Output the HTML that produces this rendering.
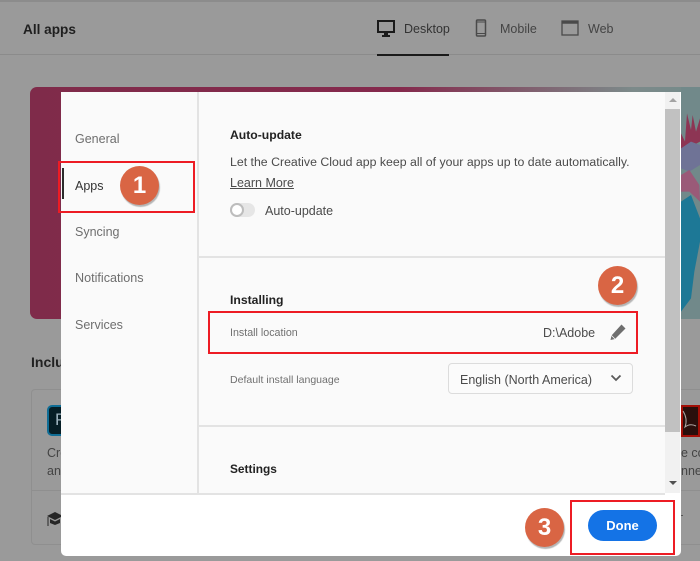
<!DOCTYPE html>
<html><head><meta charset="utf-8"><style>
html,body{margin:0;padding:0}
body{width:700px;height:561px;overflow:hidden;position:relative;background:#9a9a9a;font-family:"Liberation Sans",sans-serif;color:#4b4b4b}
.a{position:absolute;white-space:nowrap}
.t{position:absolute;white-space:nowrap;line-height:16px}
.red{position:absolute;border:2px solid #ed1c24;box-sizing:border-box}
.c{position:absolute;width:39px;height:39px;border-radius:50%;background:#d96544;color:#fff;font-weight:bold;font-size:24px;line-height:39px;text-align:center;box-shadow:1px 2px 1px #b5b5b5}
</style></head><body>
<div class="a" style="left:0;top:0;width:700px;height:2px;background:#8c8c8c"></div>
<div class="a" style="left:0;top:54px;width:700px;height:1px;background:#8b8b8b"></div>
<div class="t" style="left:23px;top:22px;font-size:13.6px;font-weight:bold;color:#1f1f1f">All apps</div>
<svg class="a" style="left:376px;top:19px" width="20" height="19" viewBox="0 0 20 19"><path d="M2 2h16v11H2z" fill="none" stroke="#1a1a1a" stroke-width="2"/><path d="M8 14h4v2h2v2H6v-2h2z" fill="#1a1a1a"/></svg>
<div class="t" style="left:404px;top:21px;font-size:12.5px;color:#333">Desktop</div>
<div class="a" style="left:377px;top:54px;width:72px;height:2px;background:#1a1a1a"></div>
<svg class="a" style="left:475px;top:19px" width="12" height="18" viewBox="0 0 12 18"><rect x="1.500" y="1" width="9" height="16" rx="1" fill="none" stroke="#4a4a4a" stroke-width="1.500"/><path d="M2 3h8M2 14.500h8" stroke="#4a4a4a"/></svg>
<div class="t" style="left:500px;top:21px;font-size:12.5px;color:#444">Mobile</div>
<svg class="a" style="left:561px;top:20px" width="18" height="16" viewBox="0 0 18 16"><rect x="1" y="1" width="16" height="14" fill="none" stroke="#4a4a4a" stroke-width="1.300"/><path d="M1 2.500h16" stroke="#4a4a4a" stroke-width="2.500"/></svg>
<div class="t" style="left:588px;top:21px;font-size:12.5px;color:#444">Web</div>

<div class="a" style="left:30px;top:87px;width:670px;height:232px;border-radius:7px 0 0 7px;overflow:hidden;background:linear-gradient(90deg,#7f2b4a 0,#85294c 55%,#7c8a8a 90%,#748b8a 100%)">
<svg style="position:absolute;left:651px;top:-2px" width="19" height="236" viewBox="0 0 57 708"><rect width="57" height="708" fill="#71898a"/><path d="M18 85L30 135 35 90 45 140 57 100V170L0 200V145L12 170z" fill="#8d3554"/><path d="M0 190L30 170 57 180V240L25 260 0 250z" fill="#6f7396"/><path d="M0 270L25 255 55 300 57 350 25 320H0z" fill="#9a5a78"/><path d="M0 350L30 330 57 400V470L40 560 30 640 0 680z" fill="#1d7896"/></svg>
</div>

<div class="t" style="left:31px;top:354px;font-size:14px;font-weight:bold;color:#222">Inclu</div>
<div class="a" style="left:31px;top:389px;width:700px;height:156px;border:1px solid #8f8f8f;border-radius:4px;box-sizing:border-box"></div>
<div class="a" style="left:32px;top:490px;width:668px;height:1px;background:#8f8f8f"></div>
<div class="a" style="left:47px;top:405px;width:25px;height:31px;background:#061e26;border:2px solid #0f6d95;border-radius:5px;box-sizing:border-box"></div>
<div class="t" style="left:55px;top:412px;font-size:17px;color:#9eb3bf">P</div>
<div class="t" style="left:47px;top:445px;font-size:12.5px;color:#444">Cre</div>
<div class="t" style="left:47px;top:463px;font-size:12.5px;color:#444">an</div>
<svg class="a" style="left:47px;top:511px" width="16" height="18" viewBox="0 0 16 18"><path d="M8 1L0 5l8 4 8-4z M3 8v4l5 2 5-2V8L8 10.500z" fill="#262626"/><path d="M1 6v9" stroke="#262626"/></svg>
<div class="a" style="left:681px;top:405px;width:19px;height:32px;background:#2a0f0c;border:2px solid #a30f07;box-sizing:border-box"></div>
<svg class="a" style="left:681px;top:405px" width="19" height="32" viewBox="0 0 19 32"><path d="M2 6q5 8 2 16 5-4 11-1" fill="none" stroke="#b0a8a5"/></svg>
<div class="t" style="left:681px;top:445px;font-size:12.5px;color:#444">e co</div>
<div class="t" style="left:681px;top:463px;font-size:12.5px;color:#444">nne</div>
<div class="a" style="left:681px;top:515px;width:2px;height:1px;background:#555"></div>

<div class="a" style="left:61px;top:92px;width:620px;height:464px;background:#fff;border-radius:0 0 5px 5px;overflow:hidden">
  <div class="a" style="left:0;top:0;width:604px;height:401px;background:#fafafa"></div>
  <div class="a" style="left:136px;top:0;width:2px;height:401px;background:#e3e3e3"></div>
  <div class="a" style="left:0;top:401px;width:604px;height:2px;background:#e3e3e3"></div>
  <div class="a" style="left:138px;top:164px;width:466px;height:2px;background:#e3e3e3"></div>
  <div class="a" style="left:138px;top:333px;width:466px;height:2px;background:#e3e3e3"></div>
  <div class="a" style="left:604px;top:0;width:15px;height:401px;background:#f1f1f1"></div>
  <div class="a" style="left:604px;top:17px;width:15px;height:323px;background:#c1c1c1"></div>
  <div class="a" style="left:608px;top:6px;width:0;height:0;border-left:4px solid transparent;border-right:4px solid transparent;border-bottom:4px solid #a3a3a3"></div>
  <div class="a" style="left:608px;top:389px;width:0;height:0;border-left:4px solid transparent;border-right:4px solid transparent;border-top:4px solid #505050"></div>
</div>

<div class="t" style="left:75px;top:131px;font-size:12.5px;color:#6e6e6e">General</div>
<div class="a" style="left:62px;top:168px;width:2px;height:31px;background:#2c2c2c"></div>
<div class="t" style="left:75px;top:178px;font-size:12.5px;color:#333">Apps</div>
<div class="t" style="left:75px;top:224px;font-size:12.5px;color:#6e6e6e">Syncing</div>
<div class="t" style="left:75px;top:270px;font-size:12.6px;color:#6e6e6e">Notifications</div>
<div class="t" style="left:75px;top:317px;font-size:12.5px;color:#6e6e6e">Services</div>

<div class="t" style="left:230px;top:127px;font-size:12.2px;font-weight:bold;color:#222">Auto-update</div>
<div class="t" style="left:230px;top:154px;font-size:12.32px;color:#4b4b4b">Let the Creative Cloud app keep all of your apps up to date automatically.</div>
<div class="t" style="left:230px;top:175px;font-size:12.5px;color:#4b4b4b;text-decoration:underline">Learn More</div>
<div class="a" style="left:230px;top:203px;width:25px;height:14px;border-radius:7px;background:#e6e6e6"></div>
<div class="a" style="left:230px;top:203px;width:14px;height:14px;border-radius:50%;background:#fff;border:2px solid #bdbdbd;box-sizing:border-box"></div>
<div class="t" style="left:265px;top:203px;font-size:12.5px;color:#4b4b4b">Auto-update</div>

<div class="t" style="left:230px;top:292px;font-size:12.2px;font-weight:bold;color:#222">Installing</div>
<div class="t" style="left:230px;top:325px;font-size:10.7px;color:#707070">Install location</div>
<div class="t" style="left:543px;top:325px;font-size:12.5px;color:#4b4b4b">D:\Adobe</div>
<svg class="a" style="left:610px;top:324px" width="16" height="16" viewBox="0 0 16 16"><path d="M11.500 0.500l4 4L5 15l-4.500 1 1-4.500z" fill="#6e6e6e"/><path d="M1.500 11.500l3.500 3.500" stroke="#fafafa" stroke-width="0.800"/></svg>
<div class="t" style="left:230px;top:372px;font-size:10.55px;color:#707070">Default install language</div>
<div class="a" style="left:448px;top:363px;width:185px;height:31px;border:1px solid #dcdcdc;border-radius:4px;box-sizing:border-box;background:#fbfbfb"></div>
<div class="t" style="left:460px;top:372px;font-size:12.5px;color:#4b4b4b">English (North America)</div>
<svg class="a" style="left:610px;top:374px" width="12" height="9" viewBox="0 0 12 9"><path d="M1.500 1.500L6 6l4.500-4.500" fill="none" stroke="#5a5a5a" stroke-width="1.800"/></svg>
<div class="t" style="left:230px;top:461px;font-size:11.9px;font-weight:bold;color:#222">Settings</div>

<div class="a" style="left:588px;top:510px;width:69px;height:31px;border-radius:16px;background:#1473e6;color:#fff;font-size:13px;font-weight:bold;line-height:32px;text-align:center">Done</div>

<div class="red" style="left:58px;top:161px;width:137px;height:52px"></div>
<div class="red" style="left:208px;top:311px;width:430px;height:43px"></div>
<div class="red" style="left:570px;top:500px;width:105px;height:55px"></div>
<div class="c" style="left:120px;top:166px">1</div>
<div class="c" style="left:598px;top:266px">2</div>
<div class="c" style="left:525px;top:508px">3</div>
</body></html>
